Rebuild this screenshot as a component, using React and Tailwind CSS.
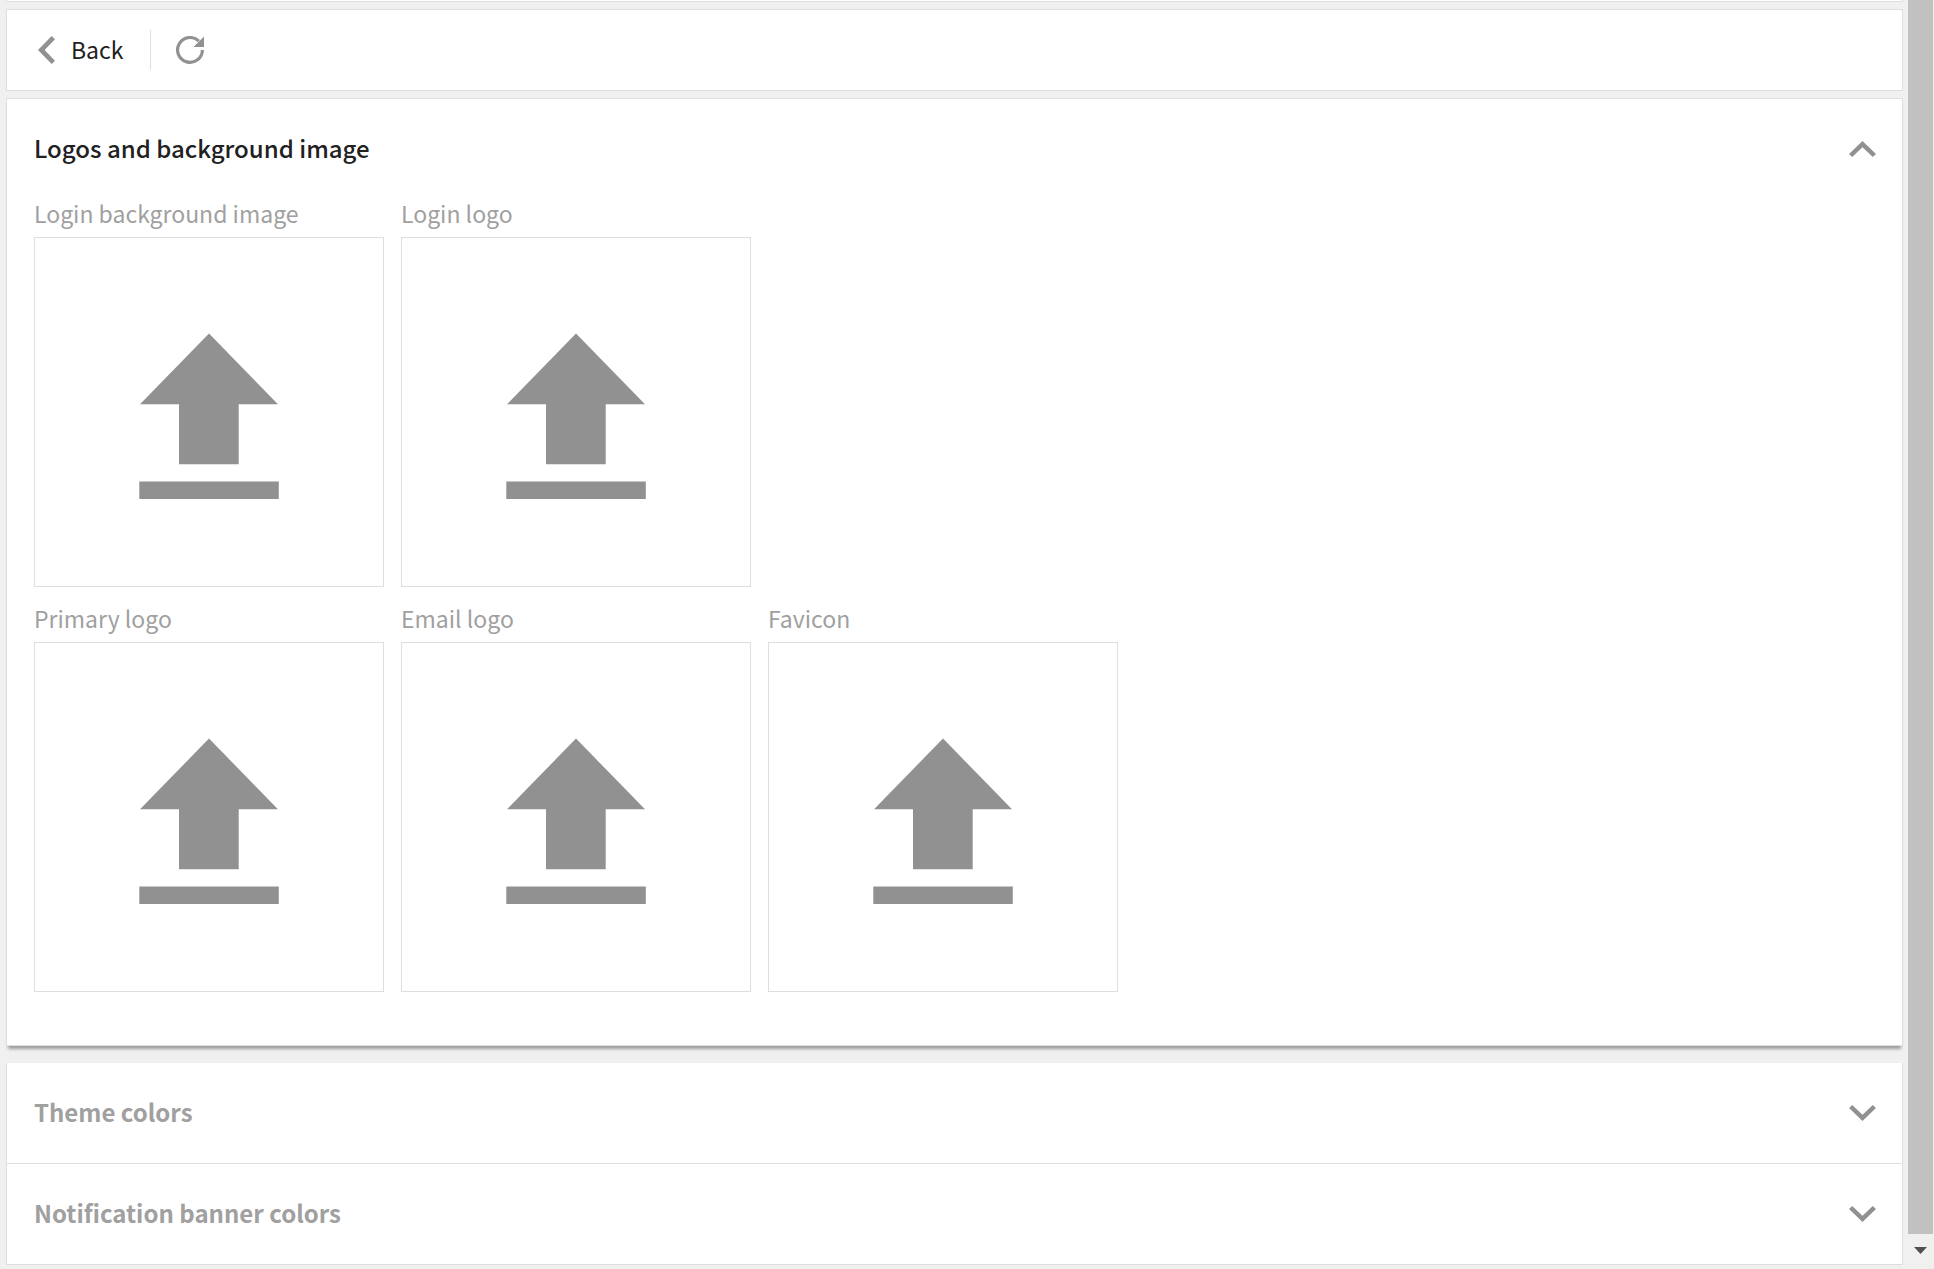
function Chevron({ direction }) {
  return (
    <svg viewBox="0 0 27 16" className={direction === "up" ? "h-4 w-[27px]" : "h-4 w-[27px] rotate-180"} aria-hidden="true">
      <path d="M13.5 0L27 13L23.8 16L13.5 6.2L3.2 16L0 13Z" fill="#919191" />
    </svg>
  );
}

function UploadTile({ label }) {
  return (
    <div className="flex w-[350px] flex-col">
      <span className="h-10 text-[23px] leading-8 text-[#a0a0a0]">{label}</span>
      <button type="button" aria-label={`Upload ${label}`} className="aspect-square w-full border border-[#dedede]">
        <svg viewBox="0 0 348 348" className="w-full" fill="#919191" aria-hidden="true">
          <path d="M174 95.5L243 166.3H203.7V226.3H144V166.3H105Z" />
          <path d="M104.3 243.5H243.8V261H104.3Z" />
        </svg>
      </button>
    </div>
  );
}

function CollapsedSection({ title }) {
  return (
    <h2 className="border-b border-[#dedede]">
      <button type="button" aria-expanded="false" className="flex h-[100px] w-full items-center justify-between pr-[26px] pl-[27px] text-left text-2xl font-bold text-[#a0a0a0]">
        <span className="pb-0.5">{title}</span>
        <Chevron direction="down" />
      </button>
    </h2>
  );
}

export default function App() {
  return (
    <div className="flex min-h-screen bg-[#f0f0f0] font-['Noto_Sans_CJK_SC',sans-serif] text-[#212121]">
      <main className="min-w-0 flex-1 pr-[5px] pl-[6px]">
        <div className="h-[2px] border-x border-b border-[#dedede] bg-white" />

        <nav className="mt-[7px] flex h-[82px] items-center border border-[#dedede] bg-white pl-[31px]">
          <button type="button" className="flex items-center text-[23px] leading-8">
            <svg viewBox="0 0 17 28" className="mr-4 h-7 w-[17px]" aria-hidden="true">
              <path d="M13.7 0L17 3.3L6.6 14L17 24.7L13.7 28L0 14Z" fill="#919191" />
            </svg>
            <span className="pb-0.5">Back</span>
          </button>
          <div className="ml-[26px] h-10 w-px bg-[#dedede]" />
          <button type="button" aria-label="Refresh" className="ml-[25px]">
            <svg viewBox="0 0 28 28" className="size-7" aria-hidden="true">
              <path d="M22.8 5.2A12.4 12.4 0 1 0 26.4 14" fill="none" stroke="#919191" strokeWidth="3.2" />
              <path d="M28 0.5V11H17.5Z" fill="#919191" />
            </svg>
          </button>
        </nav>

        <section className="mt-[7px] border border-[#dedede] bg-white pr-[26px] pb-[53px] pl-[27px] shadow-[0_5px_3px_-2px_rgba(0,0,0,0.35)]">
          <h2>
            <button type="button" aria-expanded="true" className="flex h-[100px] w-full items-center justify-between text-left text-2xl font-medium">
              <span className="pb-0.5">Logos and background image</span>
              <Chevron direction="up" />
            </button>
          </h2>
          <div className="-mt-0.5 flex flex-wrap gap-[17px]">
            <UploadTile label="Login background image" />
            <UploadTile label="Login logo" />
          </div>
          <div className="mt-[15px] flex flex-wrap gap-[17px]">
            <UploadTile label="Primary logo" />
            <UploadTile label="Email logo" />
            <UploadTile label="Favicon" />
          </div>
        </section>

        <section className="mt-[17px] border-x border-[#dedede] bg-white">
          <CollapsedSection title="Theme colors" />
          <CollapsedSection title="Notification banner colors" />
        </section>
      </main>

      <div className="flex w-[26px] flex-col pr-px" aria-hidden="true">
        <div className="flex-1 bg-[#c1c1c1]" />
        <div className="flex h-[35px] items-center justify-center pb-0.5">
          <svg viewBox="0 0 13 7" className="h-[7px] w-[13px]">
            <path d="M0 0H13L6.5 7Z" fill="#505050" />
          </svg>
        </div>
      </div>
    </div>
  );
}
